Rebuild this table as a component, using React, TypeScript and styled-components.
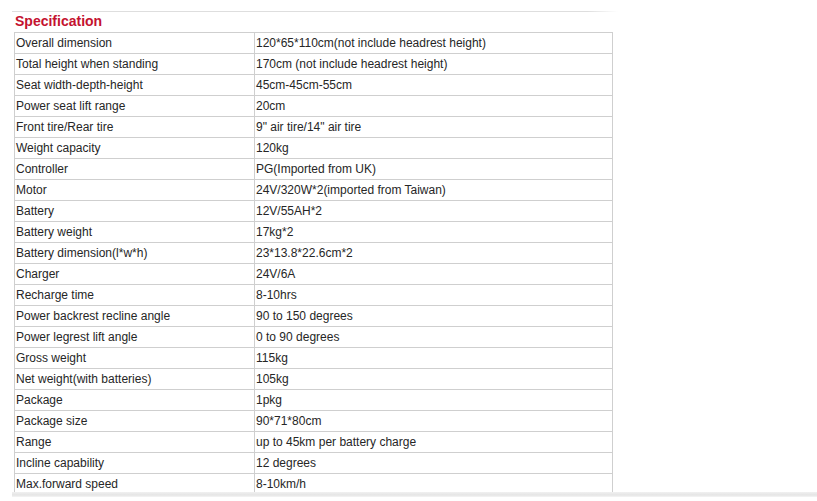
import React from "react";
import styled, { createGlobalStyle } from "styled-components";

const Global = createGlobalStyle`
  html, body { margin: 0; padding: 0; background: #ffffff; }
  body { font-family: "Liberation Sans", Arial, sans-serif; }
`;

const Page = styled.div`
  width: 817px;
  height: 501px;
  overflow: hidden;
  padding: 11px 0 0 12px;
  box-sizing: border-box;
  display: flex;
  flex-direction: column;
`;

const TopRule = styled.div`
  width: 606px;
  height: 1px;
  background: linear-gradient(to right, #dedede 0%, #dedede 95%, #ffffff 100%);
`;

const Title = styled.div`
  height: 20px;
  padding-left: 3px;
  font-size: 14px;
  font-weight: bold;
  color: #c4122f;
  line-height: 19px;
`;

const Clip = styled.div`
  height: 460px;
  overflow: hidden;
  padding-left: 2px;
`;

const Table = styled.table`
  border-collapse: collapse;
  width: 599px;
  table-layout: fixed;
  font-size: 12px;
  color: #262626;
`;

const Row = styled.tr`
  height: 21px;
`;

const Cell = styled.td<{ $w?: number }>`
  border: 1px solid #cfcfcf;
  padding: 0 0 0 1px;
  height: 20px;
  line-height: 20px;
  white-space: nowrap;
  overflow: hidden;
  ${(p) => (p.$w ? `width: ${p.$w}px;` : "")}
`;

const BottomBar = styled.div`
  height: 5px;
  margin-right: -12px;
  background: linear-gradient(to bottom, #f0f0f0, #e5e5e5 60%, #f5f5f5);
`;

const rows: [string, string][] = [
  ["Overall dimension", "120*65*110cm(not include headrest height)"],
  ["Total height when standing", "170cm (not include headrest height)"],
  ["Seat width-depth-height", "45cm-45cm-55cm"],
  ["Power seat lift range", "20cm"],
  ["Front tire/Rear tire", "9\" air tire/14\" air tire"],
  ["Weight capacity", "120kg"],
  ["Controller", "PG(Imported from UK)"],
  ["Motor", "24V/320W*2(imported from Taiwan)"],
  ["Battery", "12V/55AH*2"],
  ["Battery weight", "17kg*2"],
  ["Battery dimension(l*w*h)", "23*13.8*22.6cm*2"],
  ["Charger", "24V/6A"],
  ["Recharge time", "8-10hrs"],
  ["Power backrest recline angle", "90 to 150 degrees"],
  ["Power legrest lift angle", "0 to 90 degrees"],
  ["Gross weight", "115kg"],
  ["Net weight(with batteries)", "105kg"],
  ["Package", "1pkg"],
  ["Package size", "90*71*80cm"],
  ["Range", "up to 45km per battery charge"],
  ["Incline capability", "12 degrees"],
  ["Max.forward speed", "8-10km/h"],
];

export default function App() {
  return (
    <>
      <Global />
      <Page>
        <TopRule />
        <Title>Specification</Title>
        <Clip>
          <Table>
            <tbody>
              {rows.map(([k, v], i) => (
                <Row key={i}>
                  <Cell $w={238}>{k}</Cell>
                  <Cell>{v}</Cell>
                </Row>
              ))}
            </tbody>
          </Table>
        </Clip>
        <BottomBar />
      </Page>
    </>
  );
}
